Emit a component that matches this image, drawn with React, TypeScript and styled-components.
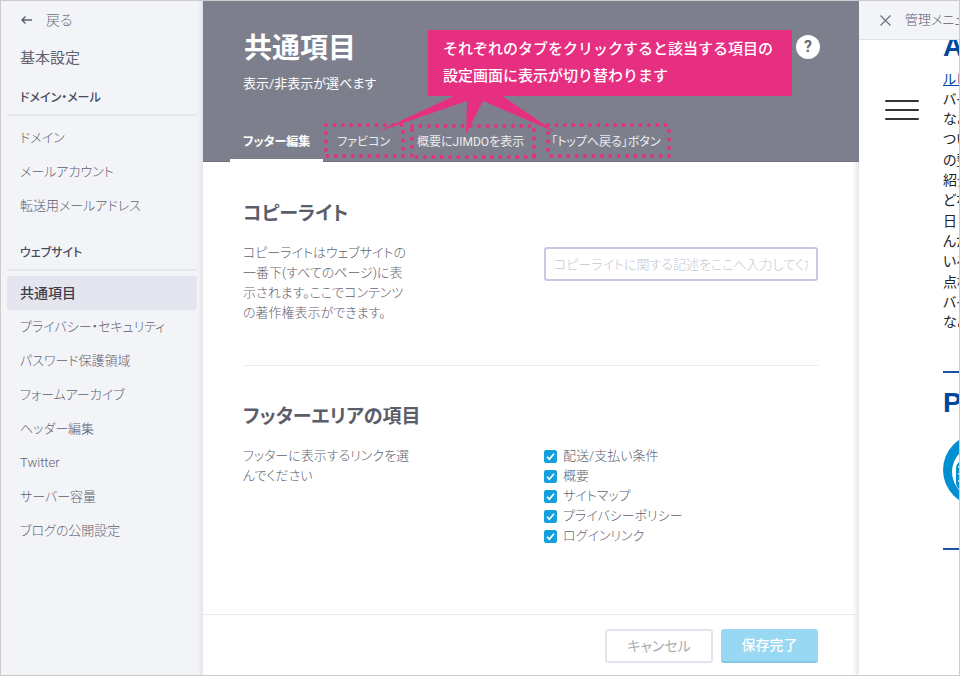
import React from "react";
import styled, { createGlobalStyle, css } from "styled-components";

const PINK = "#e72f82";
const SLATE = "#7d808c";

const GlobalStyle = createGlobalStyle`
  *, *::before, *::after { box-sizing: border-box; }
  body {
    margin: 0;
    background: #fff;
    color: #5f626f;
    font-family: Roboto, "Noto Sans CJK JP", sans-serif;
    font-size: 13px;
    line-height: 20px;
    font-weight: 300;
    font-feature-settings: "palt";
  }
  h1, h2, h3, p, ul { margin: 0; padding: 0; }
  ul { list-style: none; }
  button, input { font: inherit; font-feature-settings: inherit; }
`;

const Frame = styled.div`
  display: grid;
  grid-template-columns: 202px minmax(0, 1fr) 100px;
  min-height: 100vh;
  border: 1px solid #ccc;
`;

/* Sidebar */

const Sidebar = styled.nav`
  padding: 9px 6px;
  background: #f3f4f8;
  box-shadow: inset -5px 0 4px -3px #dfe1e7;
`;

const BackButton = styled.button`
  display: flex;
  align-items: center;
  gap: 13px;
  height: 20px;
  padding: 0 13px;
  border: 0;
  background: none;
  color: #6b6e7b;
  font-size: 14px;
  cursor: pointer;
`;

const SidebarTitle = styled.h2`
  padding: 18px 13px 0;
  font-size: 15px;
  font-weight: 400;
  line-height: 20px;
`;

const GroupTitle = styled.h3`
  padding: 20px 13px 6px;
  border-bottom: 2px solid #e7e8ee;
  color: #484b58;
  font-size: 12px;
  font-weight: 500;
  line-height: 20px;
`;

const NavList = styled.ul`
  padding-top: 5px;
`;

const NavLink = styled.a<{ $active?: boolean }>`
  display: block;
  padding: 0 13px;
  border-radius: 3px;
  color: #5f626f;
  line-height: 34px;
  text-decoration: none;
  white-space: nowrap;
  ${(p) =>
    p.$active &&
    css`
      background: #e5e5f0;
      color: #3b3d49;
      font-size: 14px;
      font-weight: 500;
    `}
`;

/* Main panel */

const Main = styled.main`
  display: flex;
  flex-direction: column;
  min-width: 0;
  box-shadow: inset -6px 0 5px -3px #e4e5e8;
`;

const Header = styled.header`
  position: relative;
  padding: 28px 27px 0;
  background: ${SLATE};
  border-bottom: 1px solid #6d7080;
  color: #fff;
`;

const Title = styled.h1`
  padding-left: 14px;
  font-size: 28px;
  font-weight: 700;
  line-height: 40px;
`;

const Subtitle = styled.p`
  padding: 5px 13px 0;
  font-weight: 400;
`;

const Tabs = styled.div`
  display: flex;
  gap: 1px;
  margin: 27px 0 -1px;
`;

const Tab = styled.button<{ $active?: boolean }>`
  flex: none;
  padding: 11px 13px 7px;
  border: 0;
  border-bottom: 3px solid ${(p) => (p.$active ? "#fff" : "transparent")};
  background: none;
  color: ${(p) => (p.$active ? "#fff" : "#ececf0")};
  font-size: 12px;
  font-weight: ${(p) => (p.$active ? 700 : 400)};
  line-height: 20px;
  white-space: nowrap;
  cursor: pointer;
`;

const Callout = styled.div`
  position: absolute;
  top: 29px;
  left: 225px;
  padding: 6px 19px 6px 15px;
  background: ${PINK};
  color: #fff;
  font-size: 15px;
  font-weight: 500;
  font-feature-settings: normal;
  line-height: 27px;
  white-space: nowrap;
`;

const Pointers = styled.svg`
  position: absolute;
  top: 0;
  left: 0;
  pointer-events: none;
`;

const HelpButton = styled.button`
  position: absolute;
  top: 34px;
  left: 593px;
  width: 24px;
  height: 24px;
  padding: 0;
  border: 0;
  border-radius: 50%;
  background: #fff;
  color: #666978;
  font-size: 16px;
  font-weight: 700;
  line-height: 24px;
  cursor: pointer;
`;

const Content = styled.div`
  flex: 1;
  padding: 38px 41px 0 40px;
`;

const Section = styled.section`
  & + & {
    margin-top: 42px;
    padding-top: 37px;
    border-top: 1px solid #ececf0;
  }
`;

const SectionTitle = styled.h2`
  color: #5b5e6a;
  font-size: 19px;
  font-weight: 700;
  line-height: 28px;
`;

const SectionBody = styled.div`
  display: grid;
  grid-template-columns: minmax(0, 1fr) 274px;
  align-items: start;
  padding-top: 15px;
`;

const TextInput = styled.input`
  width: 100%;
  height: 34px;
  margin-top: 4px;
  padding: 0 8px;
  border: 2px solid #c6cadc;
  border-radius: 3px;
  background: #fff;
  color: #6b6e7b;
  outline: none;
  &::placeholder {
    color: #c3c6d3;
    opacity: 1;
  }
`;

const CheckLabel = styled.label`
  display: flex;
  align-items: center;
  gap: 6px;
  cursor: pointer;
`;

const Checkbox = styled.input`
  appearance: none;
  width: 13px;
  height: 13px;
  margin: 0;
  border: 1px solid #14a0db;
  border-radius: 2px;
  background: #fff;
  &:checked {
    background: #14a0db
      url("data:image/svg+xml,%3Csvg xmlns='http://www.w3.org/2000/svg' viewBox='0 0 11 11'%3E%3Cpath d='M2 5.8L4.3 8.2L9 2.7' fill='none' stroke='white' stroke-width='1.6'/%3E%3C/svg%3E")
      center / 11px 11px no-repeat;
  }
`;

const CheckList = styled.div`
  display: grid;
`;

const Footer = styled.footer`
  display: flex;
  justify-content: flex-end;
  gap: 8px;
  padding: 14px 41px 12px;
  border-top: 1px solid #e9eaee;
`;

const Button = styled.button<{ $primary?: boolean }>`
  width: ${(p) => (p.$primary ? "97px" : "108px")};
  height: 34px;
  padding: 0;
  border: ${(p) => (p.$primary ? "0" : "2px solid #e3e5ee")};
  border-bottom: ${(p) => (p.$primary ? "2px solid #83c7e4" : "2px solid #e3e5ee")};
  border-radius: 3px;
  background: ${(p) => (p.$primary ? "#99d8f2" : "#fff")};
  color: ${(p) => (p.$primary ? "#fff" : "#a9abb3")};
  font-size: 14px;
  font-weight: ${(p) => (p.$primary ? 500 : 400)};
  cursor: pointer;
`;

/* Site preview */

const Preview = styled.aside`
  min-width: 0;
  overflow: hidden;
  color: #222;
`;

const CloseButton = styled.button`
  display: flex;
  align-items: center;
  gap: 14px;
  width: 100%;
  height: 39px;
  padding: 0 21px;
  border: 0;
  border-bottom: 1px solid #dfe1e6;
  background: #f3f4f8;
  color: #5f626f;
  white-space: nowrap;
  cursor: pointer;
  svg { flex: none; }
`;

const Site = styled.div`
  display: grid;
  grid-template-columns: 34px 16px;
  column-gap: 24px;
  padding-left: 26px;
  white-space: nowrap;
`;

const MenuButton = styled.button`
  width: 34px;
  height: 24px;
  margin-top: 58px;
  padding: 0;
  border: 0;
  background: none;
  cursor: pointer;
  svg { display: block; }
`;

const Article = styled.div`
  overflow: hidden;
  font-size: 14px;
  font-weight: 400;
`;

const SiteHeading = styled.h2<{ $clipped?: boolean }>`
  height: 28px;
  margin-top: ${(p) => (p.$clipped ? "-7px" : "16px")};
  color: #00479d;
  font-family: "Liberation Sans", sans-serif;
  font-size: 28px;
  font-weight: 700;
  line-height: 28px;
`;

const SiteLink = styled.a`
  display: block;
  height: 20px;
  margin-top: 8px;
  color: #00479d;
  text-decoration: underline;
`;

const Lines = styled.p`
  padding-bottom: 1px;
  line-height: 20px;
`;

const Rule = styled.hr`
  margin: 38px 0 0;
  border: 0;
  border-top: 2px solid #1f4f9f;
`;

const Emblem = styled.svg`
  display: block;
  margin-top: 17px;
  margin-bottom: 42px;
`;

const paragraphs = [
  ["バイク", "なご", "つい"],
  ["の整備", "紹介", "どな"],
  ["日々", "んだ", "いろ"],
  ["点検", "バイク", "なご"],
];

const mailLinks = ["ドメイン", "メールアカウント", "転送用メールアドレス"];
const siteLinks = [
  "共通項目",
  "プライバシー・セキュリティ",
  "パスワード保護領域",
  "フォームアーカイブ",
  "ヘッダー編集",
  "Twitter",
  "サーバー容量",
  "ブログの公開設定",
];
const tabs = ["フッター編集", "ファビコン", "概要にJIMDOを表示", "「トップへ戻る」ボタン"];
const footerLinks = ["配送/支払い条件", "概要", "サイトマップ", "プライバシーポリシー", "ログインリンク"];

const Links = ({ items, active }: { items: string[]; active?: string }) => (
  <NavList>
    {items.map((t) => (
      <li key={t}>
        <NavLink href="#" $active={t === active} aria-current={t === active ? "page" : undefined}>
          {t}
        </NavLink>
      </li>
    ))}
  </NavList>
);

export default function App() {
  return (
    <>
      <GlobalStyle />
      <Frame>
        <Sidebar>
          <BackButton type="button">
            <svg width="13" height="10" viewBox="0 0 13 10" fill="none" stroke="#5b5e6a" strokeWidth="1.4">
              <path d="M12 5H2M5.5 1.5L2 5L5.5 8.5" />
            </svg>
            戻る
          </BackButton>
          <SidebarTitle>基本設定</SidebarTitle>
          <GroupTitle>ドメイン・メール</GroupTitle>
          <Links items={mailLinks} />
          <GroupTitle>ウェブサイト</GroupTitle>
          <Links items={siteLinks} active="共通項目" />
        </Sidebar>

        <Main>
          <Header>
            <Title>共通項目</Title>
            <Subtitle>表示/非表示が選べます</Subtitle>
            <Tabs role="tablist">
              {tabs.map((t, i) => (
                <Tab key={t} type="button" role="tab" aria-selected={i === 0} $active={i === 0}>
                  {t}
                </Tab>
              ))}
            </Tabs>
            <Pointers width="480" height="160" viewBox="0 0 480 160" aria-hidden="true">
              <path d="M253 94L174 131L264 100L263 133L280 100L352 131L298 94Z" fill={PINK} />
              <g fill="none" stroke={PINK} strokeWidth="4" strokeLinecap="round" strokeDasharray="0 8.4">
                <path d="M123 124H200M200 131V155M200 155H123M123 132V155" />
                <path d="M209 125H331M331 129V155M331 156H209M209 129V155" />
                <path d="M345 124H466M466 130V155M466 155H345M345 132V155" />
              </g>
            </Pointers>
            <Callout>
              それぞれのタブをクリックすると該当する項目の
              <br />
              設定画面に表示が切り替わります
            </Callout>
            <HelpButton type="button" aria-label="ヘルプ">?</HelpButton>
          </Header>

          <Content>
            <Section>
              <SectionTitle>コピーライト</SectionTitle>
              <SectionBody>
                <p id="copyright-note">
                  コピーライトはウェブサイトの
                  <br />
                  一番下(すべてのページ)に表
                  <br />
                  示されます。ここでコンテンツ
                  <br />
                  の著作権表示ができます。
                </p>
                <TextInput
                  type="text"
                  aria-label="コピーライト"
                  aria-describedby="copyright-note"
                  placeholder="コピーライトに関する記述をここへ入力してください"
                />
              </SectionBody>
            </Section>
            <Section>
              <SectionTitle>フッターエリアの項目</SectionTitle>
              <SectionBody>
                <p>
                  フッターに表示するリンクを選
                  <br />
                  んでください
                </p>
                <CheckList>
                  {footerLinks.map((t) => (
                    <CheckLabel key={t}>
                      <Checkbox type="checkbox" defaultChecked />
                      {t}
                    </CheckLabel>
                  ))}
                </CheckList>
              </SectionBody>
            </Section>
          </Content>

          <Footer>
            <Button type="button">キャンセル</Button>
            <Button type="button" $primary>
              保存完了
            </Button>
          </Footer>
        </Main>

        <Preview>
          <CloseButton type="button">
            <svg width="11" height="11" viewBox="0 0 11 11" stroke="#6b6e7b" strokeWidth="1.2">
              <path d="M0.5 0.5L10.5 10.5M10.5 0.5L0.5 10.5" />
            </svg>
            管理メニュー
          </CloseButton>
          <Site>
            <MenuButton type="button" aria-label="メニュー">
              <svg width="34" height="24" viewBox="0 0 34 24" stroke="#333" strokeWidth="2" strokeLinecap="round">
                <path d="M1 3H33M1 12H33M1 21H33" />
              </svg>
            </MenuButton>
            <Article>
              <SiteHeading $clipped>A</SiteHeading>
              <SiteLink href="#">ルビ</SiteLink>
              {paragraphs.map((lines, i) => (
                <Lines key={i}>
                  {lines.map((l) => (
                    <React.Fragment key={l}>
                      {l}
                      <br />
                    </React.Fragment>
                  ))}
                </Lines>
              ))}
              <Rule />
              <SiteHeading>P</SiteHeading>
              <Emblem width="72" height="72" viewBox="0 0 72 72">
                <circle cx="36" cy="36" r="36" fill="#008fd0" />
                <circle cx="36" cy="38" r="27" fill="#fff" />
                <rect x="13" y="27" width="44" height="29" rx="7" fill="#008fd0" />
                <path d="M15 33H20M15 40H20M15 47H20" stroke="#fff" strokeWidth="1.5" />
              </Emblem>
              <Rule />
            </Article>
          </Site>
        </Preview>
      </Frame>
    </>
  );
}
